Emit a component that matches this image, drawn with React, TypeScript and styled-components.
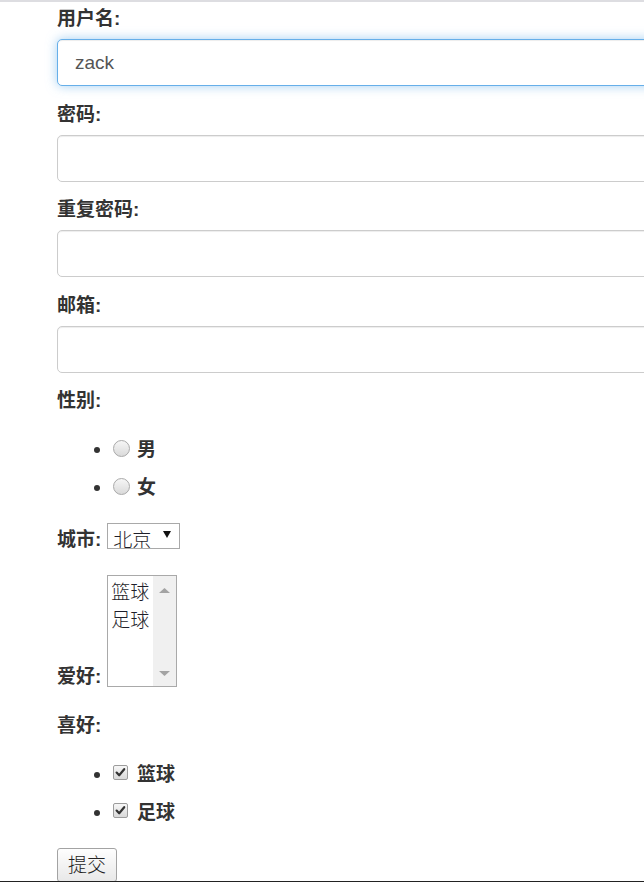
import React from "react";
import styled, { createGlobalStyle } from "styled-components";

const GlobalStyle = createGlobalStyle`
  html, body { margin: 0; padding: 0; background: #fff; }
  body {
    font-family: "Liberation Sans", "Noto Sans CJK SC", sans-serif;
    color: #333;
    overflow: hidden;
  }
  * { box-sizing: border-box; }
`;

const Page = styled.div`
  display: flex;
  flex-direction: column;
  width: 644px;
  height: 882px;
  overflow: hidden;
`;

const TopRule = styled.div`
  flex: none;
  height: 2px;
  background: #dddde1;
`;

const BottomRule = styled.div`
  flex: none;
  height: 1px;
  background: #222;
`;

const Content = styled.main`
  flex: 1;
  min-height: 0;
  overflow: hidden;
  padding: 3px 0 0 57px;
`;

const Form = styled.form`
  width: 720px;
  display: flex;
  flex-direction: column;
  align-items: flex-start;
`;

const Field = styled.div`
  width: 100%;
  display: flex;
  flex-direction: column;
  align-items: flex-start;
  margin-bottom: 14.5px;
`;

const Label = styled.label<{ $lh?: number; $mb?: number; $mt?: number }>`
  display: block;
  font-size: 19px;
  font-weight: 700;
  color: #333;
  line-height: ${(p) => p.$lh ?? 27}px;
  margin-bottom: ${(p) => p.$mb ?? 0}px;
  margin-top: ${(p) => p.$mt ?? 0}px;
`;

const TextInput = styled.input<{ $focused?: boolean }>`
  display: block;
  width: 100%;
  height: 47px;
  padding: 0 17px;
  font: 19px "Liberation Sans", "Noto Sans CJK SC", sans-serif;
  color: #555;
  background: #fff;
  border: 1px solid ${(p) => (p.$focused ? "#66afe9" : "#ccc")};
  border-radius: 5px;
  outline: none;
  box-shadow: inset 0 1px 1px rgba(0, 0, 0, 0.075)
    ${(p) => (p.$focused ? ", 0 0 11px rgba(102, 175, 233, 0.6)" : "")};
`;

const ChoiceList = styled.ul<{ $mt: number }>`
  list-style: none;
  margin: ${(p) => p.$mt}px 0 0;
  padding: 0;
`;

const ChoiceItem = styled.li`
  display: flex;
  align-items: center;
  height: 38px;
`;

const Bullet = styled.span`
  flex: none;
  width: 6px;
  height: 6px;
  border-radius: 50%;
  background: #333;
  margin: 2px 13px 0 37px;
`;

const ChoiceLabel = styled.label<{ $gap: number }>`
  display: flex;
  align-items: center;
  gap: ${(p) => p.$gap}px;
  font-size: 19px;
  font-weight: 700;
  color: #333;
  line-height: 27px;
`;

const Radio = styled.input.attrs({ type: "radio" })`
  appearance: none;
  flex: none;
  width: 17px;
  height: 17px;
  margin: 0 0 2px;
  border: 1px solid #a9a9a9;
  border-radius: 50%;
  background: linear-gradient(#f6f6f6, #dadada);
`;

const CheckWrap = styled.span`
  position: relative;
  flex: none;
  display: block;
  width: 15px;
  height: 15px;
  margin-bottom: 4px;
`;

const CheckBox = styled.input.attrs({ type: "checkbox" })`
  appearance: none;
  display: block;
  width: 15px;
  height: 15px;
  margin: 0;
  border: 1px solid #9c9c9c;
  border-radius: 2px;
  background: linear-gradient(#f7f7f7, #d9d9d9);
`;

const CheckMark = styled.svg`
  position: absolute;
  left: 0;
  top: 0;
  pointer-events: none;
`;

const InlineRow = styled.div<{ $mt: number }>`
  display: flex;
  align-items: flex-end;
  gap: 6px;
  margin-top: ${(p) => p.$mt}px;
`;

const SelectWrap = styled.span`
  position: relative;
  display: block;
  margin-bottom: 1px;
`;

const Select = styled.select`
  appearance: none;
  display: block;
  width: 73px;
  height: 26px;
  margin: 0;
  padding: 4px 0 0 5px;
  border: 1px solid #a9a9a9;
  border-radius: 0;
  background: #fff;
  color: #1e1e2a;
  font: 300 19px/22px "Noto Sans CJK SC", sans-serif;
  outline: none;
  overflow: hidden;
`;

const SelectArrow = styled.svg`
  position: absolute;
  right: 9px;
  top: 5px;
  pointer-events: none;
`;

const ListBox = styled.div`
  display: flex;
  width: 70px;
  height: 112px;
  border: 1px solid #a9a9a9;
  background: #fff;
`;

const ListOptions = styled.div`
  flex: 1;
  padding: 1px 0 0 3px;
`;

const ListOption = styled.div`
  font: 300 19px/28px "Noto Sans CJK SC", sans-serif;
  color: #1e1e2a;
  white-space: nowrap;
`;

const ScrollTrack = styled.div`
  flex: none;
  width: 23px;
  background: #f0f0f0;
  display: flex;
  flex-direction: column;
  align-items: center;
  justify-content: space-between;
  padding: 12px 0 10px;
`;

const SubmitButton = styled.button`
  flex: none;
  margin-top: 17px;
  height: 34px;
  padding: 1px 10px 4px;
  border: 1px solid #a3a3a3;
  border-radius: 3px;
  background: linear-gradient(#fefefe, #e8e8e8);
  color: #222;
  font: 300 19px/27px "Noto Sans CJK SC", sans-serif;
`;

const fields = [
  { id: "username", label: "用户名", value: "zack", focused: true, type: "text" },
  { id: "password", label: "密码", value: "", focused: false, type: "password" },
  { id: "password2", label: "重复密码", value: "", focused: false, type: "password" },
  { id: "email", label: "邮箱", value: "", focused: false, type: "email" },
];

const Check = () => (
  <CheckWrap>
    <CheckBox defaultChecked />
    <CheckMark width="15" height="15" viewBox="0 0 15 15">
      <path d="M3.6 7.6 L6.2 10.3 L11.2 4.2" fill="none" stroke="#333" strokeWidth="2.2" strokeLinecap="round" strokeLinejoin="round" />
    </CheckMark>
  </CheckWrap>
);

export default function App() {
  return (
    <>
      <GlobalStyle />
      <Page>
        <TopRule />
        <Content>
          <Form onSubmit={(e) => e.preventDefault()}>
            {fields.map((f) => (
              <Field key={f.id}>
                <Label htmlFor={f.id} $mb={7}>
                  {f.label}:
                </Label>
                <TextInput id={f.id} type={f.type} defaultValue={f.value} $focused={f.focused} />
              </Field>
            ))}

            <Label>性别:</Label>
            <ChoiceList $mt={16}>
              {["男", "女"].map((g) => (
                <ChoiceItem key={g}>
                  <Bullet />
                  <ChoiceLabel $gap={7}>
                    <Radio name="gender" value={g} />
                    {g}
                  </ChoiceLabel>
                </ChoiceItem>
              ))}
            </ChoiceList>

            <InlineRow $mt={17}>
              <Label htmlFor="city" $lh={20}>
                城市:
              </Label>
              <SelectWrap>
                <Select id="city" defaultValue="北京">
                  <option value="北京">北京</option>
                  <option value="上海">上海</option>
                </Select>
                <SelectArrow width="8" height="16" viewBox="0 0 8 16">
                  <path d="M0 3 L8 3 L4 10 Z" fill="#111" />
                </SelectArrow>
              </SelectWrap>
            </InlineRow>

            <InlineRow $mt={25}>
              <Label $lh={20}>爱好:</Label>
              <ListBox role="listbox" aria-multiselectable="true">
                <ListOptions>
                  <ListOption role="option">篮球</ListOption>
                  <ListOption role="option">足球</ListOption>
                </ListOptions>
                <ScrollTrack>
                  <svg width="11" height="5" viewBox="0 0 11 5">
                    <path d="M0 5 L5.5 0 L11 5 Z" fill="#a3a3a3" />
                  </svg>
                  <svg width="11" height="5" viewBox="0 0 11 5">
                    <path d="M0 0 L11 0 L5.5 5 Z" fill="#a3a3a3" />
                  </svg>
                </ScrollTrack>
              </ListBox>
            </InlineRow>

            <Label $mt={24.5}>喜好:</Label>
            <ChoiceList $mt={16.5}>
              {["篮球", "足球"].map((h) => (
                <ChoiceItem key={h}>
                  <Bullet />
                  <ChoiceLabel $gap={9}>
                    <Check />
                    {h}
                  </ChoiceLabel>
                </ChoiceItem>
              ))}
            </ChoiceList>

            <SubmitButton type="submit">提交</SubmitButton>
          </Form>
        </Content>
        <BottomRule />
      </Page>
    </>
  );
}
